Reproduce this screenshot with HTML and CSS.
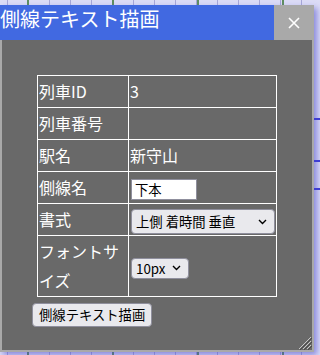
FILE: index.html
```html
<!DOCTYPE html>
<html lang="ja">
<head>
  <meta charset="UTF-8">
  <title>側線テキスト描画</title>
  <link rel="stylesheet" href="styles.css">
</head>
<body>
  <div class="dialog">
    <div class="titlebar">
      <span class="title">側線テキスト描画</span>
      <button class="close" aria-label="閉じる">
        <svg width="12" height="12" viewBox="0 0 12 12">
          <path d="M1 1 L11 11 M11 1 L1 11" stroke="#fff" stroke-width="1.6" fill="none"/>
        </svg>
      </button>
    </div>

    <div class="content">
      <table class="form">
        <tr><td class="label">列車ID</td><td>3</td></tr>
        <tr><td class="label">列車番号</td><td></td></tr>
        <tr><td class="label">駅名</td><td>新守山</td></tr>
        <tr><td class="label">側線名</td><td><input type="text" class="track-name" value="下本"></td></tr>
        <tr>
          <td class="label">書式</td>
          <td>
            <select class="format">
              <option>上側 着時間 垂直</option>
              <option>下側 発時間 垂直</option>
            </select>
          </td>
        </tr>
        <tr>
          <td class="label">フォントサイズ</td>
          <td>
            <select class="font-size">
              <option>10px</option>
              <option>12px</option>
              <option>14px</option>
            </select>
          </td>
        </tr>
      </table>

      <button class="draw-btn">側線テキスト描画</button>

      <!-- resize grip -->
      <svg class="grip" width="14" height="14" viewBox="0 0 14 14">
        <path d="M13 1 L1 13 M13 5 L5 13 M13 9 L9 13" stroke="#c8c8c8" stroke-width="1" fill="none"/>
        <path d="M14 2 L2 14 M14 6 L6 14 M14 10 L10 14" stroke="#4a4a4a" stroke-width="1" fill="none"/>
      </svg>
    </div>
  </div>
</body>
</html>
```

FILE: styles.css
```css
body {
  margin: 0;
  padding-top: 5px;
  height: 350px;
  font-family: "Noto Sans CJK JP", "Noto Sans", sans-serif;
  background-color: #dcdcf6;
  background-image:
    linear-gradient(to bottom, transparent 118px, #3c3cd8 118px, #3c3cd8 120px, transparent 120px,
      transparent 160px, #3c3cd8 160px, #3c3cd8 162px, transparent 162px,
      transparent 188px, #3c3cd8 188px, #3c3cd8 190px, transparent 190px),
    repeating-linear-gradient(to right, transparent 0, transparent 27px, #5f8f5f 27px, #5f8f5f 29px, transparent 29px, transparent 85px),
    repeating-linear-gradient(to right, transparent 0, transparent 7px, #a8a8d8 7px, #a8a8d8 8px, transparent 8px, transparent 21px);
}

.dialog {
  width: 314px;
  box-shadow: 3px 3px 6px rgba(70, 70, 200, 0.55);
}

.titlebar {
  display: flex;
  height: 35px;
  background-color: #4169e1;
}
.title {
  flex: 1;
  color: #fff;
  font-size: 20px;
  line-height: 28px;
  white-space: nowrap;
}
.close {
  width: 40px;
  height: 35px;
  border: none;
  padding: 0;
  margin: 0;
  background-color: #a9a9a9;
  display: flex;
  align-items: center;
  justify-content: center;
  cursor: pointer;
}

.content {
  position: relative;
  height: 275px;
  padding: 35px 0 0 30px;
  background-color: #696969;
  border: 2px solid #a9a9a9;
  border-top: none;
}

.form {
  border-collapse: collapse;
  width: 240px;
  margin-left: 5px;
  color: #fff;
  font-size: 16px;
  line-height: 29px;
}
.form td {
  border: 1px solid #fff;
  padding: 1px;
  vertical-align: middle;
}
.form td.label { width: 88px; }

.track-name {
  width: 58px;
  margin: 0 0 0 1px;
  padding: 1px 3px;
  border: 1px solid #8f8f9d;
  font-family: inherit;
  font-size: 13.33px;
  line-height: 17px;
  vertical-align: middle;
}

.format,
.font-size {
  appearance: none;
  margin: 0 0 0 1px;
  padding: 0 22px 0 4px;
  border: 1px solid #8f8f9d;
  border-radius: 4px;
  color: #000;
  font-family: inherit;
  font-size: 13.33px;
  line-height: 19px;
  height: 21px;
  background: #e9e9ed url("data:image/svg+xml,%3Csvg xmlns='http://www.w3.org/2000/svg' width='9' height='6' viewBox='0 0 9 6'%3E%3Cpath d='M1 1 L4.5 4.5 L8 1' stroke='%23000' stroke-width='1.4' fill='none'/%3E%3C/svg%3E") no-repeat right 7px center;
  vertical-align: middle;
}
.format {
  width: 144px;
  height: 25px;
  padding-top: 2px;
  padding-bottom: 2px;
}

.draw-btn {
  margin-top: 6px;
  padding: 1px 6px;
  border: 1px solid #8f8f9d;
  border-radius: 4px;
  background-color: #e9e9ed;
  color: #000;
  font-family: inherit;
  font-size: 13.33px;
  line-height: 20px;
}

.grip {
  position: absolute;
  right: 0;
  bottom: 0;
}
```
